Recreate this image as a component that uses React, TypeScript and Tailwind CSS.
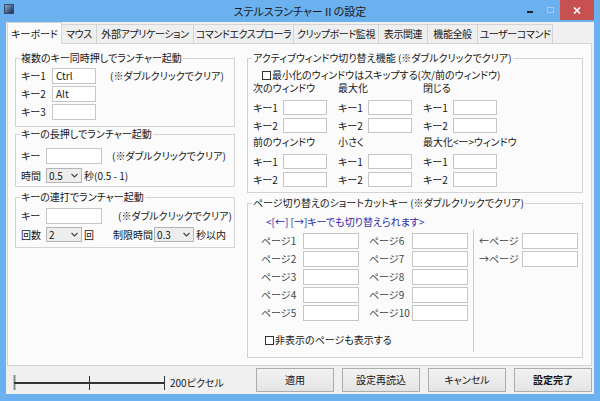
import React from "react";

const F = "font-['Noto_Sans_CJK_JP',sans-serif] [font-feature-settings:'palt']";

const Box = ({ className = "", children }: { className?: string; children?: React.ReactNode }) => (
  <div className={`bg-white border border-[#c6c6c6] pl-[3px] flex items-center text-[10px] leading-[12px] shrink-0 ${className}`}>{children}</div>
);

const Sel = ({ className = "", value }: { className?: string; value: string }) => (
  <div className={`bg-[#ededed] border border-[#b4b4b4] flex items-center justify-between pl-[2px] pr-[3px] shrink-0 ${className}`}>
    <span>{value}</span>
    <svg width="7" height="5" viewBox="0 0 7 5"><path d="M0.5 1 L3.5 4 L6.5 1" stroke="#444" fill="none" strokeWidth="1.1" /></svg>
  </div>
);

const Group = ({ label, className = "", children }: { label: string; className?: string; children?: React.ReactNode }) => (
  <fieldset className={`border border-[#d3d3d3] pl-[4px] ${className}`}>
    <legend className="px-[1px] leading-[12px]">{label}</legend>
    {children}
  </fieldset>
);

const Check = () => <div className="w-[9px] h-[9px] border border-[#333] bg-white shrink-0" />;

const tabs: { t: string; w: string }[] = [
  { t: "マウス", w: "w-[36px]" },
  { t: "外部アプリケーション", w: "w-[98px]" },
  { t: "コマンドエクスプローラ", w: "w-[101px]" },
  { t: "クリップボード監視", w: "w-[86px]" },
  { t: "表示関連", w: "w-[50px]" },
  { t: "機能全般", w: "w-[51px]" },
  { t: "ユーザーコマンド", w: "w-[76px]" },
];

export default function App() {
  const noteText = "(※ダブルクリックでクリア)";
  const winHeads1 = ["次のウィンドウ", "最大化", "閉じる"];
  const winHeads2 = ["前のウィンドウ", "小さく", "最大化<ー>ウィンドウ"];
  const keyRows = (
    <div className="mt-[6px] flex flex-col gap-[3px]">
      {["キー1", "キー2"].map((k) => (
        <div key={k} className="flex h-[15px] pl-[1px]">
          {[0, 1, 2].map((c) => (
            <div key={c} className="w-[85px] flex items-center">
              <span className="w-[30px]">{k}</span>
              <Box className="w-[44px] h-[15px]" />
            </div>
          ))}
        </div>
      ))}
    </div>
  );
  return (
    <div className={`w-[600px] h-[401px] bg-[#6cb1ef] flex flex-col text-[10px] leading-[12px] text-[#161616] whitespace-nowrap ${F}`}>
      {/* title bar */}
      <div className="h-[22px] grid grid-cols-[1fr_auto_1fr]">
        <div className="flex items-start">
          <div className="ml-[4px] mt-[4px] w-[10px] h-[10px] bg-gradient-to-br from-[#8aa7c8] via-[#4a6a94] to-[#1f2c44] border border-[#3a4b66]" />
        </div>
        <div className="text-[11px] leading-[22px] text-[#1a1a1a]">ステルスランチャーⅡの設定</div>
        <div className="flex items-start justify-end">
          <div className="w-[6px] h-[2px] bg-[#222] mt-[11px]" />
          <div className="ml-[14px] mt-[7px] w-[7px] h-[6px] border border-[#a8c8e8]" />
          <div className="ml-[6px] mr-[6px] w-[34px] h-[20px] bg-[#c75050] flex items-center justify-center">
            <svg width="8" height="7" viewBox="0 0 8 7"><path d="M1 0.5 L7 6.5 M7 0.5 L1 6.5" stroke="#fff" strokeWidth="1.6" /></svg>
          </div>
        </div>
      </div>
      {/* client */}
      <div className="mx-[6px] h-[372px] bg-[#f0f0f0] flex flex-col">
        {/* tabs */}
        <div className="h-[21px] flex items-end pl-[1px]">
          <div className="relative z-10 -mb-px h-[22px] w-[55px] bg-[#fbfbfb] border border-b-0 border-[#d4d4d4] flex items-center justify-center">キーボード</div>
          {tabs.map((t) => (
            <div key={t.t} className={`-ml-px h-[19px] ${t.w} bg-[#efefef] border border-b-0 border-[#d4d4d4] flex items-center justify-center overflow-hidden tracking-[-0.4px]`}>{t.t}</div>
          ))}
        </div>
        {/* panel */}
        <div className="ml-[1px] mr-[2px] h-[323px] bg-[#fbfbfb] border border-[#d4d4d4] flex pl-[7px] pt-[8px]">
          {/* left column */}
          <div className="w-[220px] flex flex-col">
            <Group label="複数のキー同時押しでランチャー起動" className="h-[75px]">
              <div className="mt-[4px] flex flex-col gap-[2px]">
                <div className="flex items-center h-[16px]">
                  <span className="w-[32px] pl-[1px]">キー1</span>
                  <Box className="w-[44px] h-[16px]">Ctrl</Box>
                  <span className="ml-[14px]">{noteText}</span>
                </div>
                <div className="flex items-center h-[16px]">
                  <span className="w-[32px] pl-[1px]">キー2</span>
                  <Box className="w-[44px] h-[16px]">Alt</Box>
                </div>
                <div className="flex items-center h-[16px]">
                  <span className="w-[32px] pl-[1px]">キー3</span>
                  <Box className="w-[44px] h-[16px]" />
                </div>
              </div>
            </Group>
            <Group label="キーの長押しでランチャー起動" className="mt-[1px] h-[59px]">
              <div className="mt-[8px] flex items-center h-[16px]">
                <span className="w-[26px] pl-[1px]">キー</span>
                <Box className="w-[56px] h-[16px]" />
                <span className="ml-[10px]">{noteText}</span>
              </div>
              <div className="mt-[4px] flex items-center h-[15px]">
                <span className="w-[26px] pl-[1px]">時間</span>
                <Sel className="w-[36px] h-[15px]" value="0.5" />
                <span className="ml-[2px]">秒(0.5 - 1)</span>
              </div>
            </Group>
            <Group label="キーの連打でランチャー起動" className="mt-[4px] h-[57px]">
              <div className="mt-[5px] flex items-center h-[16px]">
                <span className="w-[26px] pl-[1px]">キー</span>
                <Box className="w-[56px] h-[16px]" />
                <span className="ml-[16px]">{noteText}</span>
              </div>
              <div className="mt-[3px] flex items-center h-[15px]">
                <span className="w-[26px] pl-[1px]">回数</span>
                <Sel className="w-[36px] h-[15px]" value="2" />
                <span className="ml-[2px]">回</span>
                <span className="ml-[19px]">制限時間</span>
                <Sel className="ml-[1px] w-[40px] h-[15px]" value="0.3" />
                <span className="ml-[2px]">秒以内</span>
              </div>
            </Group>
          </div>
          {/* right column */}
          <div className="ml-[12px] w-[336px] flex flex-col">
            <Group label="アクティブウィンドウ切り替え機能 (※ダブルクリックでクリア)" className="h-[141px]">
              <div className="mt-[5px] h-[12px] flex items-center pl-[10px]">
                <Check />
                <span className="ml-[1px]">最小化のウィンドウはスキップする(次/前のウィンドウ)</span>
              </div>
              <div className="mt-[1px] h-[12px] flex pl-[1px]">
                {winHeads1.map((h) => (
                  <span key={h} className="w-[85px]">{h}</span>
                ))}
              </div>
              {keyRows}
              <div className="mt-[3px] h-[12px] flex pl-[1px]">
                {winHeads2.map((h) => (
                  <span key={h} className="w-[85px]">{h}</span>
                ))}
              </div>
              {keyRows}
            </Group>
            <Group label="ページ切り替えのショートカットキー (※ダブルクリックでクリア)" className="mt-[4px] h-[161px]">
              <div className="mt-[7px] h-[12px] pl-[14px] text-[#2a2aa8]">&lt;[←] [→]キーでも切り替えられます&gt;</div>
              <div className="mt-[2px] flex">
                <div className="w-[221px] pt-[3px] flex flex-col">
                  <div className="flex flex-col gap-[2px]">
                    {[1, 2, 3, 4, 5].map((i) => (
                      <div key={i} className="flex items-center h-[16px] pl-[9px] text-[#444]">
                        <span className="w-[42px]">ページ{i}</span>
                        <Box className="w-[56px] h-[16px]" />
                        <span className="ml-[10px] w-[43px]">ページ{i + 5}</span>
                        <Box className="w-[56px] h-[16px]" />
                      </div>
                    ))}
                  </div>
                  <div className="mt-[13px] h-[12px] flex items-center pl-[13px]">
                    <Check />
                    <span className="ml-[1px]">非表示のページも表示する</span>
                  </div>
                </div>
                <div className="w-[2px] h-[122px] border-l border-[#c8c8c8] border-r border-r-white" />
                <div className="pt-[3px] flex flex-col gap-[2px]">
                  <div className="flex items-center h-[16px] pl-[4px] text-[#444]">
                    <span className="w-[43px]">←ページ</span>
                    <Box className="w-[56px] h-[16px]" />
                  </div>
                  <div className="flex items-center h-[16px] pl-[4px] text-[#444]">
                    <span className="w-[43px]">→ページ</span>
                    <Box className="w-[56px] h-[16px]" />
                  </div>
                </div>
              </div>
            </Group>
          </div>
        </div>
        {/* bottom */}
        <div className="h-[28px] flex items-start">
          <div className="mt-[9px] ml-[7px] flex items-center">
            <svg width="153" height="16" viewBox="0 0 153 16">
              <rect x="0.5" y="0" width="2" height="15" fill="#8a8a8a" />
              <rect x="1" y="7" width="151" height="2" fill="#333" />
              <rect x="76" y="1" width="1" height="14" fill="#333" />
              <rect x="151" y="1" width="1" height="14" fill="#333" />
            </svg>
            <span className="ml-[4px] text-[#222]">200ピクセル</span>
          </div>
          <div className="ml-auto mr-[2px] mt-[2px] flex gap-[8px]">
            {["適用", "設定再読込", "キャンセル", "設定完了"].map((b) => (
              <div key={b} className={`w-[78px] h-[24px] border border-[#adadad] bg-gradient-to-b from-[#f2f2f2] to-[#e4e4e4] flex items-center justify-center ${b === "設定完了" ? "font-bold" : ""}`}>{b}</div>
            ))}
          </div>
        </div>
      </div>
    </div>
  );
}
